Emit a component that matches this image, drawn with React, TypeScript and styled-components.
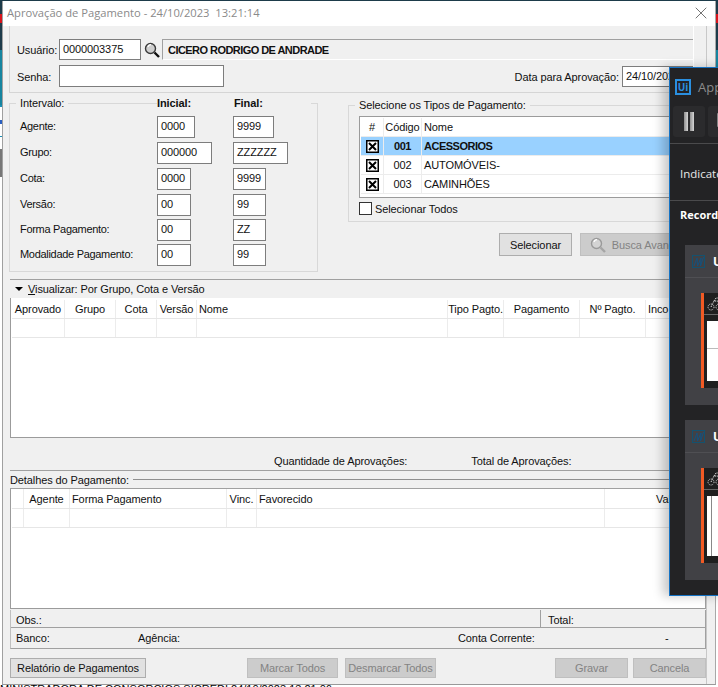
import { Fragment } from "react";
import styled, { createGlobalStyle } from "styled-components";
import { X } from "lucide-react";

const GlobalStyle = createGlobalStyle`
  html, body {
    margin: 0;
    padding: 0;
    background: #ffffff;
  }
  * {
    box-sizing: border-box;
  }
`;

const Desktop = styled.div`
  position: relative;
  width: 718px;
  height: 687px;
  overflow: hidden;
  padding: 1px 2px 0 2px;
  font-family: "Liberation Sans", Arial, sans-serif;
  font-size: 11px;
  letter-spacing: -0.1px;
  color: #111;
  background: linear-gradient(
    to bottom,
    #1d3b4a 0,
    #1d3b4a 14px,
    #d8141c 14px,
    #d8141c 23px,
    #1d3b4a 23px,
    #1d3b4a 50px,
    #16849f 50px,
    #16849f 105px,
    #1a8fb5 105px,
    #1a8fb5 107px,
    #ffffff 107px,
    #ffffff 120px,
    #2a5fc0 120px,
    #2a5fc0 124px,
    #ffffff 124px,
    #ffffff 136px,
    #1a8fb5 136px,
    #1a8fb5 137px,
    #ffffff 137px,
    #ffffff 149px,
    #777 149px,
    #777 177px,
    #ffffff 177px
  );
`;

const Window = styled.div`
  width: 714px;
  height: 684px;
  background: #f0f0f0;
  border-left: 1px solid #a0a0a0;
  border-right: 1px solid #a8a8a8;
  border-bottom: 1px solid #999;
  display: flex;
  flex-direction: column;
`;

const TitleBar = styled.div`
  height: 25px;
  flex: none;
  background: #fff;
  display: flex;
  align-items: center;
  justify-content: space-between;
  padding: 0 4px 2px 4px;
  font-family: "Open Sans", sans-serif;
  font-size: 11.2px;
  letter-spacing: 0;
  color: #8a8a8a;
  white-space: pre;
`;

const Content = styled.div`
  flex: 1;
  width: 704px;
  padding: 0 0 0 6px;
  border-right: 1px solid #c8c8c8;
  display: flex;
  flex-direction: column;
`;

const LowerArea = styled.div`
  margin-left: 1px;
  display: flex;
  flex-direction: column;
`;

const LoginBox = styled.div`
  height: 67px;
  margin-right: 12px;
  border-left: 1px solid #d5d5d5;
  border-bottom: 1px solid #d5d5d5;
  border-right: 1px solid #fff;
  padding: 13px 0 0 7px;
  display: flex;
  flex-direction: column;
  gap: 5px;
`;

const LoginRow = styled.div`
  display: flex;
  align-items: center;
`;

const Label = styled.span<{ $w?: number }>`
  display: inline-block;
  flex: none;
  padding-top: 1px;
  ${(p) => (p.$w ? `width: ${p.$w}px;` : "")}
  white-space: nowrap;
`;

const Input = styled.div<{ $w: number; $h?: number }>`
  flex: none;
  width: ${(p) => p.$w}px;
  height: ${(p) => p.$h ?? 22}px;
  background: #fff;
  border: 1px solid #7d7d7d;
  padding: 3px 0 0 3px;
  white-space: nowrap;
  overflow: hidden;
`;

const LensButton = styled.div`
  width: 21px;
  display: flex;
  justify-content: center;
`;

const NameBox = styled.div`
  flex: 1;
  height: 21px;
  margin-top: -1px;
  border-top: 1px solid #a0a0a0;
  border-left: 1px solid #a0a0a0;
  border-bottom: 1px solid #fff;
  display: flex;
  align-items: center;
  padding: 1px 0 0 5px;
  font-weight: 700;
  letter-spacing: -0.55px;
`;

const DateLabel = styled.span`
  margin-left: auto;
  margin-right: 3px;
  padding-top: 1px;
`;

const MiddleRow = styled.div`
  display: flex;
  height: 182px;
  margin-top: 4px;
`;

const Group = styled.fieldset`
  margin: 0;
  padding: 0;
  border: 1px solid #d8d8d8;
  min-width: 0;
`;

const Legend = styled.legend`
  padding: 0 4px;
  margin-left: -4px;
  line-height: 13px;
`;

const IntervalGroup = styled(Group)`
  width: 309px;
  height: 175px;
  padding: 0 0 0 10px;
  flex: none;
`;

const IntervalHeads = styled.div`
  position: absolute;
  margin: -13px 0 0 137px;
  display: flex;
  font-weight: 700;
  background: #f0f0f0;
`;

const HeadCell = styled.span`
  width: 77px;
`;

const IntervalGrid = styled.div`
  display: grid;
  grid-template-columns: 137px 76px auto;
  grid-template-rows: 26px 26px 26px 25px 25px 25px;
  padding-top: 6px;
`;

const IntervalLabel = styled.div`
  line-height: 20px;
  letter-spacing: -0.3px;
`;

const RightColumn = styled.div`
  margin-left: 30px;
  flex: 1;
  display: flex;
  flex-direction: column;
  align-items: flex-start;
`;

const TypesGroup = styled(Group)`
  width: 340px;
  height: 123px;
  margin-top: 2px;
  padding: 0 0 0 10px;
`;

const TypesGrid = styled.div`
  width: 320px;
  height: 82px;
  margin-top: 4px;
  background: #fff;
  border: 1px solid #9b9b9b;
  padding: 1px 0 0 1px;
`;

const TypesRow = styled.div<{ $sel?: boolean }>`
  display: grid;
  grid-template-columns: 23px 38px 1fr;
  height: 19px;
  background: ${(p) => (p.$sel ? "#99d1ff" : "#fff")};
  font-weight: ${(p) => (p.$sel ? 700 : 400)};
  letter-spacing: ${(p) => (p.$sel ? "-0.5px" : "-0.1px")};
  border-bottom: 1px solid #ececec;
  align-items: center;
`;

const TypesCell = styled.div<{ $center?: boolean }>`
  height: 100%;
  display: flex;
  align-items: center;
  justify-content: ${(p) => (p.$center ? "center" : "flex-start")};
  padding-left: ${(p) => (p.$center ? 0 : 2)}px;
  border-right: 1px solid #ececec;
  white-space: nowrap;
`;

const CrossBox = styled.svg`
  width: 13px;
  height: 13px;
  display: block;
`;

const CheckRow = styled.div`
  display: flex;
  align-items: center;
  gap: 3px;
  margin-top: 4px;
`;

const CheckBox = styled.div`
  width: 13px;
  height: 13px;
  background: #fff;
  border: 1px solid #333;
`;

const SelectButtons = styled.div`
  display: flex;
  gap: 8px;
  margin: 11px 0 0 151px;
`;

const Button = styled.div<{ $w: number; $h?: number; $off?: boolean }>`
  flex: none;
  width: ${(p) => p.$w}px;
  height: ${(p) => p.$h ?? 23}px;
  display: flex;
  align-items: center;
  justify-content: center;
  gap: 6px;
  white-space: nowrap;
  overflow: hidden;
  background: ${(p) => (p.$off ? "#cccccc" : "#e1e1e1")};
  border: 1px solid ${(p) => (p.$off ? "#bfbfbf" : "#adadad")};
  color: ${(p) => (p.$off ? "#838383" : "#111")};
`;

const ViewSection = styled.section`
  border-top: 1px solid #a0a0a0;
`;

const ViewBar = styled.div`
  height: 18px;
  display: flex;
  align-items: center;
  padding-left: 5px;
  gap: 5px;
`;

const Arrow = styled.div`
  width: 0;
  height: 0;
  border-left: 4.5px solid transparent;
  border-right: 4.5px solid transparent;
  border-top: 4px solid #000;
`;

const Underlined = styled.span`
  text-decoration: underline;
`;

const GridBox = styled.div<{ $h: number }>`
  height: ${(p) => p.$h}px;
  background: #fff;
  border-left: 1px solid #9b9b9b;
  border-bottom: 1px solid #9b9b9b;
  padding-left: 1px;
  overflow: hidden;
`;

const GridRow = styled.div<{ $cols: string; $h: number }>`
  display: grid;
  grid-template-columns: ${(p) => p.$cols};
  height: ${(p) => p.$h}px;
  border-bottom: 1px solid #e6e6e6;
`;

const ViewHeadRow = styled(GridRow)`
  padding-top: 2px;
`;

const GridCell = styled.div<{ $align?: string; $indent?: number }>`
  display: flex;
  align-items: center;
  justify-content: ${(p) => p.$align ?? "flex-start"};
  padding: 0 2px 0 ${(p) => p.$indent ?? 2}px;
  border-right: 1px solid #ececec;
  white-space: nowrap;
  overflow: hidden;
`;

const SummaryRow = styled.div`
  height: 33px;
  border-bottom: 1px solid #a0a0a0;
  display: flex;
  align-items: flex-end;
  padding: 0 0 3px 264px;
`;

const SummaryTotal = styled.span`
  margin-left: 64px;
`;

const DetailsLegend = styled.div`
  height: 17px;
  display: flex;
  align-items: center;
  gap: 4px;
`;

const LegendLine = styled.div`
  flex: 1;
  height: 1px;
  background: #8f8f8f;
`;

const DetailsGrid = styled(GridBox)`
  border-top: 1px solid #a0a0a0;
  border-right: 1px solid #a0a0a0;
`;

const InfoBox = styled.div`
  margin-top: 1px;
  border-left: 1px solid #c0c0c0;
  border-right: 1px solid #a0a0a0;
  border-bottom: 1px solid #a0a0a0;
`;

const ObsRow = styled.div`
  height: 18px;
  display: grid;
  grid-template-columns: 529px 1fr;
  border-bottom: 1px solid #a0a0a0;
`;

const ObsCell = styled.div`
  display: flex;
  align-items: center;
  padding: 2px 0 0 5px;
  &:last-child {
    border-left: 1px solid #a0a0a0;
    padding-left: 7px;
  }
`;

const BankRow = styled.div`
  height: 20px;
  display: grid;
  grid-template-columns: 122px 320px 207px 1fr;
  align-items: center;
  padding-left: 5px;
`;

const FooterButtons = styled.div`
  margin-top: 9px;
  display: flex;
`;

const Gap = styled.div<{ $w: number }>`
  flex: none;
  width: ${(p) => p.$w}px;
`;

const StatusLine = styled.div`
  margin: -2px 0 0 -2px;
  line-height: 13px;
  white-space: nowrap;
  letter-spacing: 0;
  color: #000;
`;

const RecorderPanel = styled.aside`
  position: absolute;
  left: 669px;
  top: 67px;
  width: 60px;
  height: 529px;
  background: #232325;
  border: 1px solid #1573c5;
  box-shadow: -6px 0 10px rgba(0, 0, 0, 0.22);
  font-family: "Open Sans", sans-serif;
  letter-spacing: 0;
  color: #fff;
  overflow: hidden;
`;

const PanelHead = styled.div`
  height: 38px;
  display: flex;
  align-items: center;
  padding-left: 5px;
  gap: 7px;
  font-size: 13px;
  color: #8b8b8b;
`;

const UiLogo = styled.div`
  width: 16px;
  height: 16px;
  border: 2px solid #2a8fe0;
  color: #2a8fe0;
  font-size: 10px;
  font-weight: 700;
  line-height: 12px;
  text-align: center;
`;

const PanelTools = styled.div`
  height: 38px;
  display: flex;
  gap: 3px;
  padding-left: 3px;
  border-bottom: 1px solid #4a4a4c;
`;

const ToolButton = styled.div`
  width: 32px;
  height: 31px;
  background: #2b2b2d;
  border-radius: 3px;
  display: flex;
  align-items: center;
  justify-content: center;
  gap: 2px;
  flex: none;
`;

const PauseBar = styled.div`
  width: 4px;
  height: 19px;
  background: linear-gradient(to right, #8f8f8f, #d6d6d6);
`;

const IndicateRow = styled.div`
  height: 57px;
  display: flex;
  align-items: center;
  padding: 2px 0 0 10px;
  font-size: 11.5px;
  color: #e8e8e8;
  border-bottom: 1px solid #4a4a4c;
  white-space: nowrap;
`;

const RecordLabel = styled.div`
  padding: 6px 0 0 10px;
  height: 44px;
  font-size: 11px;
  font-weight: 700;
`;

const Card = styled.div<{ $mt?: number }>`
  margin: ${(p) => p.$mt ?? 0}px 0 0 15px;
  width: 60px;
  height: 160px;
  background: #414145;
`;

const CardHead = styled.div`
  height: 33px;
  display: flex;
  align-items: center;
  gap: 8px;
  padding-left: 7px;
  border-bottom: 1px solid #4f4f53;
  font-size: 12px;
  font-weight: 700;
`;

const CardMark = styled.svg`
  width: 13px;
  height: 13px;
  flex: none;
`;

const Thumb = styled.div`
  margin: 15px 0 0 16px;
  height: 95px;
  width: 40px;
  border-left: 3px solid #f15a24;
  background: #1f1f1f;
`;

const ThumbBar = styled.div`
  height: 22px;
  display: flex;
  align-items: center;
  padding-left: 3px;
  border-bottom: 1px solid #666;
`;

const ThumbBody = styled.div<{ $split?: boolean }>`
  margin: 6px 0 0 3px;
  height: 60px;
  ${(p) =>
    p.$split
      ? "background: linear-gradient(to right, #fff 4px, #888 4px, #888 5px, #fff 5px);"
      : "background: linear-gradient(to bottom, #fff 27px, #bbb 27px, #bbb 28px, #fff 28px);"}
`;

const viewCols = "53px 51px 41px 40px 251px 56px 76px 66px 1fr";
const detailCols = "12px 46px 157px 30px 348px 1fr";

const intervals = [
  { label: "Agente:", a: "0000", aw: 38, b: "9999", bw: 41 },
  { label: "Grupo:", a: "000000", aw: 55, b: "ZZZZZZ", bw: 55 },
  { label: "Cota:", a: "0000", aw: 34, b: "9999", bw: 33 },
  { label: "Versão:", a: "00", aw: 34, b: "99", bw: 33 },
  { label: "Forma Pagamento:", a: "00", aw: 34, b: "ZZ", bw: 33 },
  { label: "Modalidade Pagamento:", a: "00", aw: 34, b: "99", bw: 33 },
];

const paymentTypes = [
  { code: "001", name: "ACESSORIOS", sel: true },
  { code: "002", name: "AUTOMÓVEIS-" },
  { code: "003", name: "CAMINHÕES" },
];

const viewHeads = ["Aprovado", "Grupo", "Cota", "Versão", "Nome", "Tipo Pagto.", "Pagamento", "Nº Pagto.", "Inco"];

function Crossed() {
  return (
    <CrossBox viewBox="0 0 13 13">
      <rect x="0.75" y="0.75" width="11.5" height="11.5" fill="#fff" stroke="#000" strokeWidth="1.5" />
      <path d="M3 3L10 10M10 3L3 10" stroke="#000" strokeWidth="2" />
    </CrossBox>
  );
}

function Lens({ faded }: { faded?: boolean }) {
  const ring = faded ? "#9a9a9a" : "#3a3a3a";
  const handle = faded ? "#a5a5a5" : "#111";
  return (
    <svg width="16" height="16" viewBox="0 0 16 16">
      <circle cx="6.5" cy="6.5" r="5" fill={faded ? "#d4d4d4" : "#cfcfcf"} stroke={ring} strokeWidth="1.4" />
      <path d="M4 5a3 3 0 0 1 3-2.4" stroke="#fff" strokeWidth="1.2" fill="none" />
      <path d="M10.5 10.5L15 15" stroke={handle} strokeWidth="2.4" />
    </svg>
  );
}

function RecordCard({ mt, split }: { mt?: number; split?: boolean }) {
  return (
    <Card $mt={mt}>
      <CardHead>
        <CardMark viewBox="0 0 13 13">
          <rect x="0.5" y="0.5" width="12" height="12" fill="none" stroke="#14526f" />
          <path d="M2 11L5 3L5.5 11L9 3L8.5 11L11.5 2" stroke="#14527f" strokeWidth="1" fill="none" />
        </CardMark>
        U
      </CardHead>
      <Thumb>
        <ThumbBar>
          <svg width="16" height="16" viewBox="0 0 16 16">
            <circle cx="4" cy="11" r="3" stroke="#ddd" strokeDasharray="1 1" fill="none" />
            <circle cx="12" cy="11" r="3" stroke="#ddd" strokeDasharray="1 1" fill="none" />
            <path d="M4 11L7 5H11L12 11M7 5L9 2H12" stroke="#ddd" strokeDasharray="1.5 1" fill="none" />
          </svg>
        </ThumbBar>
        <ThumbBody $split={split} />
      </Thumb>
    </Card>
  );
}

export default function App() {
  return (
    <Desktop>
      <GlobalStyle />
      <Window>
        <TitleBar>
          <span>Aprovação de Pagamento - 24/10/2023  13:21:14</span>
          <X size={20} strokeWidth={1.1} color="#666" />
        </TitleBar>
        <Content>
          <LoginBox>
            <LoginRow>
              <Label $w={42}>Usuário:</Label>
              <Input $w={82} $h={21}>0000003375</Input>
              <LensButton>
                <Lens />
              </LensButton>
              <NameBox>CICERO RODRIGO DE ANDRADE</NameBox>
            </LoginRow>
            <LoginRow>
              <Label $w={42}>Senha:</Label>
              <Input $w={165} />
              <DateLabel>Data para Aprovação:</DateLabel>
              <Input $w={71} $h={21}>24/10/2023</Input>
            </LoginRow>
          </LoginBox>
          <MiddleRow>
            <IntervalGroup>
              <Legend>Intervalo:</Legend>
              <IntervalHeads>
                <HeadCell>Inicial:</HeadCell>
                <HeadCell>Final:</HeadCell>
              </IntervalHeads>
              <IntervalGrid>
                {intervals.map((row) => (
                  <Fragment key={row.label}>
                    <IntervalLabel>{row.label}</IntervalLabel>
                    <Input $w={row.aw}>{row.a}</Input>
                    <Input $w={row.bw}>{row.b}</Input>
                  </Fragment>
                ))}
              </IntervalGrid>
            </IntervalGroup>
            <RightColumn>
              <TypesGroup>
                <Legend>Selecione os Tipos de Pagamento:</Legend>
                <TypesGrid>
                  <TypesRow>
                    <TypesCell $center>#</TypesCell>
                    <TypesCell $center>Código</TypesCell>
                    <TypesCell>Nome</TypesCell>
                  </TypesRow>
                  {paymentTypes.map((t) => (
                    <TypesRow key={t.code} $sel={t.sel}>
                      <TypesCell $center>
                        <Crossed />
                      </TypesCell>
                      <TypesCell $center>{t.code}</TypesCell>
                      <TypesCell>{t.name}</TypesCell>
                    </TypesRow>
                  ))}
                </TypesGrid>
                <CheckRow>
                  <CheckBox />
                  Selecionar Todos
                </CheckRow>
              </TypesGroup>
              <SelectButtons>
                <Button $w={73}>Selecionar</Button>
                <Button $w={122} $off>
                  <Lens faded />
                  Busca Avançada
                </Button>
              </SelectButtons>
            </RightColumn>
          </MiddleRow>
          <LowerArea>
            <ViewSection>
              <ViewBar>
                <Arrow />
                <span>
                  <Underlined>V</Underlined>isualizar: Por Grupo, Cota e Versão
                </span>
              </ViewBar>
              <GridBox $h={140}>
                <ViewHeadRow $cols={viewCols} $h={21}>
                  {viewHeads.map((h, i) => (
                    <GridCell key={h} $align={i === 4 || i === 8 ? "flex-start" : "center"}>
                      {h}
                    </GridCell>
                  ))}
                </ViewHeadRow>
                <GridRow $cols={viewCols} $h={19}>
                  {viewHeads.map((h) => (
                    <GridCell key={h} />
                  ))}
                </GridRow>
              </GridBox>
            </ViewSection>
            <SummaryRow>
              <span>Quantidade de Aprovações:</span>
              <SummaryTotal>Total de Aprovações:</SummaryTotal>
            </SummaryRow>
            <DetailsLegend>
              <span>Detalhes do Pagamento:</span>
              <LegendLine />
            </DetailsLegend>
            <DetailsGrid $h={121}>
              <GridRow $cols={detailCols} $h={20}>
                <GridCell />
                <GridCell $align="center">Agente</GridCell>
                <GridCell>Forma Pagamento</GridCell>
                <GridCell $align="center">Vinc.</GridCell>
                <GridCell>Favorecido</GridCell>
                <GridCell $indent={51}>Valor</GridCell>
              </GridRow>
              <GridRow $cols={detailCols} $h={19}>
                {Array.from({ length: 6 }).map((_, i) => (
                  <GridCell key={i} />
                ))}
              </GridRow>
            </DetailsGrid>
            <InfoBox>
              <ObsRow>
                <ObsCell>Obs.:</ObsCell>
                <ObsCell>Total:</ObsCell>
              </ObsRow>
              <BankRow>
                <span>Banco:</span>
                <span>Agência:</span>
                <span>Conta Corrente:</span>
                <span>-</span>
              </BankRow>
            </InfoBox>
            <FooterButtons>
              <Button $w={136} $h={20}>Relatório de Pagamentos</Button>
              <Gap $w={101} />
              <Button $w={91} $h={20} $off>Marcar Todos</Button>
              <Gap $w={7} />
              <Button $w={91} $h={20} $off>Desmarcar Todos</Button>
              <Gap $w={119} />
              <Button $w={73} $h={20} $off>Gravar</Button>
              <Gap $w={5} />
              <Button $w={73} $h={20} $off>Cancela</Button>
            </FooterButtons>
          </LowerArea>
        </Content>
      </Window>
      <StatusLine>MINISTRADORA DE CONSORCIOS SICREDI 24/10/2023 13:21:06</StatusLine>
      <RecorderPanel>
        <PanelHead>
          <UiLogo>Ui</UiLogo>
          App
        </PanelHead>
        <PanelTools>
          <ToolButton>
            <PauseBar />
            <PauseBar />
          </ToolButton>
          <ToolButton>
            <svg width="14" height="18" viewBox="0 0 14 18">
              <path d="M1 1H13V13L7 17L1 13Z" fill="none" stroke="#9a9a9a" strokeWidth="1.6" />
            </svg>
          </ToolButton>
        </PanelTools>
        <IndicateRow>Indicate</IndicateRow>
        <RecordLabel>Record</RecordLabel>
        <RecordCard />
        <RecordCard mt={15} split />
      </RecorderPanel>
    </Desktop>
  );
}
